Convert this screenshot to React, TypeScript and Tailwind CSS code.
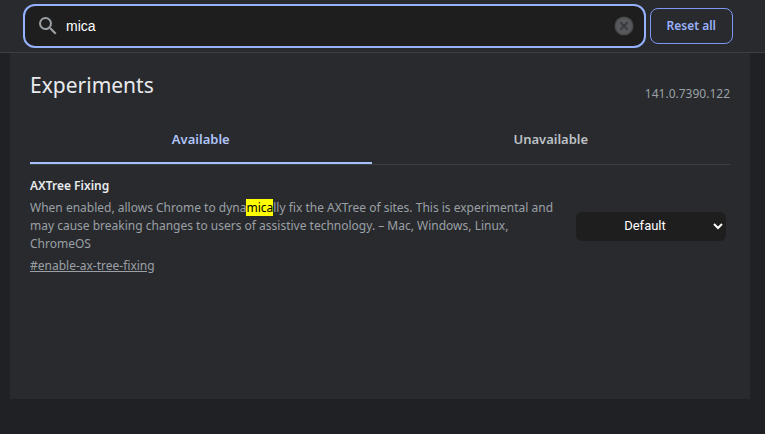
import { useState } from "react"

const description =
  "When enabled, allows Chrome to dynamically fix the AXTree of sites. This is experimental and may cause breaking changes to users of assistive technology. – Mac, Windows, Linux, ChromeOS"

export default function App() {
  const [query, setQuery] = useState("mica")
  const [tab, setTab] = useState<"available" | "unavailable">("available")

  return (
    <div className="min-h-screen bg-[#202124] font-['Noto_Sans',sans-serif] text-xs text-[#9aa0a6]">
      <header className="flex items-center gap-1 border-b border-[#3c4043] bg-[#292a2d] pt-1 pr-8 pb-1 pl-[23px]">
        <SearchBox value={query} onChange={setQuery} />
        <button
          type="button"
          className="h-9 shrink-0 rounded-lg border border-[#7b98f5] px-4 font-semibold text-[#99b0fa]"
          onClick={() => setQuery("")}
        >
          Reset all
        </button>
      </header>

      <main className="mr-[15px] ml-[10px] min-h-[346px] bg-[#292a2d] px-5 pt-[14px]">
        <div className="flex items-end justify-between pb-[15px]">
          <h1 className="font-['Noto_Sans',sans-serif] text-[21px] leading-9 text-[#e8eaed]">Experiments</h1>
          <span className="leading-[18px]">141.0.7390.122</span>
        </div>

        <div role="tablist" className="flex border-b border-[#3c4043]">
          <TabButton label="Available" selected={tab === "available"} onClick={() => setTab("available")} />
          <TabButton label="Unavailable" selected={tab === "unavailable"} onClick={() => setTab("unavailable")} />
        </div>

        {tab === "available" && <Experiment query={query} />}
      </main>
    </div>
  )
}

function SearchBox({ value, onChange }: { value: string; onChange: (value: string) => void }) {
  return (
    <div className="flex h-11 min-w-0 flex-1 items-center rounded-xl border-2 border-[#96b2ff] bg-[#1e1e1f] pr-[10px] pl-[11px]">
      <svg className="size-6 shrink-0 fill-[#9aa0a6]" viewBox="0 0 24 24" aria-hidden="true">
        <path d="M15.5 14h-.79l-.28-.27A6.47 6.47 0 0 0 16 9.5 6.5 6.5 0 1 0 9.5 16c1.61 0 3.09-.59 4.23-1.57l.27.28v.79l5 4.99L20.49 19l-4.99-5zm-6 0C7.01 14 5 11.99 5 9.5S7.01 5 9.5 5 14 7.01 14 9.5 11.99 14 9.5 14z" />
      </svg>
      <input
        type="text"
        aria-label="Search flags"
        className="ml-1 min-w-0 flex-1 bg-transparent px-0.5 font-['Liberation_Sans',sans-serif] text-sm text-white outline-none"
        value={value}
        onChange={(e) => onChange(e.target.value)}
      />
      <button type="button" aria-label="Clear search" className="shrink-0" onClick={() => onChange("")}>
        <svg className="size-5" viewBox="0 0 20 20" aria-hidden="true">
          <circle cx="10" cy="10" r="9.5" fill="#4a4b4d" />
          <circle cx="10" cy="10" r="8" fill="#56585b" />
          <path d="M6.4 6.4l7.2 7.2M13.6 6.4l-7.2 7.2" stroke="#37383b" strokeWidth="1.8" />
        </svg>
      </button>
    </div>
  )
}

type TabButtonProps = { label: string; selected: boolean; onClick: () => void }

function TabButton({ label, selected, onClick }: TabButtonProps) {
  return (
    <button
      type="button"
      role="tab"
      aria-selected={selected}
      className={`h-[46px] flex-auto border-b-2 text-[13px] font-semibold ${
        selected ? "border-[#a8c0fa] text-[#b0c5fa]" : "border-transparent text-[#bdc1c6]"
      }`}
      onClick={onClick}
    >
      {label}
    </button>
  )
}

function Experiment({ query }: { query: string }) {
  return (
    <section className="flex items-center gap-3 pt-3 pr-1">
      <div className="min-w-0 flex-1 leading-[18px]">
        <h2 className="font-semibold text-[#e8eaed]">AXTree Fixing</h2>
        <p className="mt-1">
          <Highlight text={description} query={query} />
        </p>
        <a href="#enable-ax-tree-fixing" className="mt-1 block w-fit underline">
          #enable-ax-tree-fixing
        </a>
      </div>
      <div className="relative w-[150px] shrink-0">
        <select
          aria-label="AXTree Fixing"
          className="block h-[29px] w-full appearance-none rounded-md bg-[#1e1e1f] pr-3 text-center font-['Roboto',sans-serif] text-[13px] text-white"
          defaultValue="Default"
        >
          <option>Default</option>
          <option>Enabled</option>
          <option>Disabled</option>
        </select>
        <svg
          className="pointer-events-none absolute top-[10px] right-[3px] h-2 w-[10px]"
          viewBox="0 0 10 8"
          aria-hidden="true"
        >
          <path d="M1 2l4 4 4-4" fill="none" stroke="#fff" strokeWidth="2" />
        </svg>
      </div>
    </section>
  )
}

// Marks the first place where the query occurs in the text
function Highlight({ text, query }: { text: string; query: string }) {
  const start = query ? text.toLowerCase().indexOf(query.toLowerCase()) : -1
  if (start < 0) return <>{text}</>

  const end = start + query.length
  return (
    <>
      {text.slice(0, start)}
      <mark className="bg-[#ffff00] text-black">{text.slice(start, end)}</mark>
      {text.slice(end)}
    </>
  )
}
